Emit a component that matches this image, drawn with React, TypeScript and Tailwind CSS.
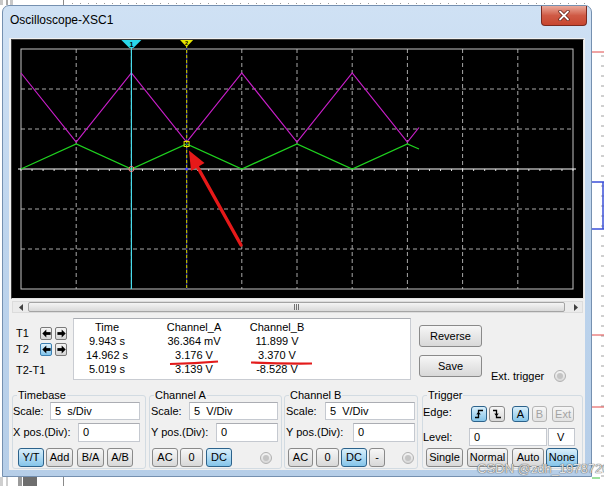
import React from "react";

type BtnProps = {
  children: React.ReactNode;
  className?: string;
  active?: boolean;
  disabled?: boolean;
};

const Btn = ({ children, className = "", active, disabled }: BtnProps) => (
  <div
    className={`flex shrink-0 items-center justify-center rounded-[3px] border text-[11px] leading-none ${
      active
        ? "border-[#2c628b] bg-linear-to-b from-[#d9effb] to-[#84c5ea]"
        : disabled
        ? "border-[#b5b5b5] bg-linear-to-b from-[#f6f6f6] to-[#e2e2e2]"
        : "border-[#8a8a8a] bg-linear-to-b from-[#f7f7f7] to-[#d8d8d8]"
    } ${disabled ? "text-[#a3a3a3]" : "text-black"} ${className}`}
  >
    {children}
  </div>
);

const Field = ({ value, className = "" }: { value: string; className?: string }) => (
  <div
    className={`flex h-full shrink-0 items-center whitespace-pre border border-[#c5c9d0] border-t-[#abadb3] bg-white pl-[4px] text-[11px] text-black ${className}`}
  >
    {value}
  </div>
);

const Radio = ({ className = "" }: { className?: string }) => (
  <div
    className={`flex h-[12px] w-[12px] shrink-0 items-center justify-center rounded-full border border-[#b0b0b0] bg-linear-to-b from-[#f4f4f4] to-[#d8d8d8] ${className}`}
  >
    <div className="h-[6px] w-[6px] rounded-full bg-[#c4c4c4]" />
  </div>
);

const ArrowBtn = ({ dir, active }: { dir: "l" | "r"; active?: boolean }) => (
  <div
    className={`flex h-[13px] w-[12px] items-center justify-center rounded-[2px] border ${
      active
        ? "border-[#3c7fb1] bg-linear-to-b from-[#dff2fc] to-[#7fc4ec]"
        : "border-[#7a7a7a] bg-linear-to-b from-[#f6f6f6] to-[#d4d4d4]"
    }`}
  >
    <svg width="9" height="9" viewBox="0 0 9 9">
      {dir === "l" ? (
        <g fill="#000">
          <polygon points="0.3,4.5 4.3,0.6 4.3,8.4" />
          <rect x="4" y="3.1" width="4.6" height="2.8" />
        </g>
      ) : (
        <g fill="#000">
          <polygon points="8.7,4.5 4.7,0.6 4.7,8.4" />
          <rect x="0.4" y="3.1" width="4.6" height="2.8" />
        </g>
      )}
    </svg>
  </div>
);

const Scope = () => {
  const gx = 9;
  const gy = 9;
  const dx = 55.2;
  const dy = 40;
  const gw = 552;
  const gh = 240;
  const cy = gy + 3 * dy;
  const vlines = [1, 2, 3, 4, 5, 6, 7, 8, 9].map((i) => gx + i * dx);
  const hlines = [1, 2, 4, 5].map((j) => gy + j * dy);
  const ticks = Array.from({ length: 51 }, (_, k) => gx + (k * dx) / 5);
  const xs = [0, 1, 2, 3, 4, 5, 6, 7].map((k) => gx + k * dx);
  const green =
    xs.map((x, k) => `${x},${k % 2 === 0 ? 129 : 104}`).join(" ") + " 407,109";
  const magenta =
    xs.map((x, k) => `${x},${k % 2 === 0 ? 33 : 102}`).join(" ") + " 407,87.5";
  const c1 = gx + 2 * dx;
  const c2 = gx + 3 * dx;

  return (
    <svg width="571" height="258" viewBox="0 0 571 258" className="block">
      <rect x="0" y="0" width="571" height="258" fill="#000" />
      {vlines.map((x) => (
        <line key={x} x1={x} y1={gy} x2={x} y2={gy + gh} stroke="#a8a8a8" strokeDasharray="4 3" />
      ))}
      {hlines.map((y) => (
        <line key={y} x1={gx} y1={y} x2={gx + gw} y2={y} stroke="#a8a8a8" strokeDasharray="4 3" />
      ))}
      <rect x={gx} y={gy} width={gw} height={gh} fill="none" stroke="#c4c4c4" />
      <line x1={gx - 3} y1={cy} x2={gx + gw + 3} y2={cy} stroke="#ffffff" />
      {ticks.map((x) => (
        <line key={x} x1={x} y1={cy} x2={x} y2={cy + 2} stroke="#e0e0e0" />
      ))}
      <polyline points={green} fill="none" stroke="#1fd21f" strokeWidth="1.3" />
      <polyline points={magenta} fill="none" stroke="#c81ec8" strokeWidth="1.2" />
      <line x1={c1} y1="0" x2={c1} y2={gy + gh} stroke="#48dcec" strokeWidth="1.2" />
      <line x1={c2} y1="0" x2={c2} y2={gy + gh} stroke="#2c2c8c" strokeWidth="1.2" />
      <line x1={c2} y1="0" x2={c2} y2={gy + gh} stroke="#b2b200" strokeWidth="1.2" strokeDasharray="3 2" />
      <polygon points={`${c1 - 10},0 ${c1 + 10},0 ${c1 + 2},8 ${c1 - 2},8`} fill="#2ad8ea" />
      <text x={c1} y="6.5" fontSize="7" fontWeight="bold" textAnchor="middle" fill="#000" fontFamily="Liberation Sans, Arial, sans-serif">
        1
      </text>
      <polygon points={`${c2 - 6.5},0 ${c2 + 6.5},0 ${c2},7`} fill="#e6e600" />
      <text x={c2} y="5" fontSize="5.5" fontWeight="bold" textAnchor="middle" fill="#000" fontFamily="Liberation Sans, Arial, sans-serif">
        2
      </text>
      <rect x={c2 - 2.5} y="101.5" width="5" height="5" fill="none" stroke="#e0e000" />
      <circle cx={c1} cy={cy} r="2.5" fill="none" stroke="#ff8a8a" />
      <circle cx={c2} cy={cy} r="1.5" fill="#3a3aff" />
      <line x1="229" y1="205" x2="185" y2="126" stroke="#e61919" strokeWidth="3.4" strokeLinecap="round" />
      <polygon points="177,110.5 192.5,123 179,131" fill="#e61919" />
    </svg>
  );
};

const ScrollBar = () => (
  <div className="ml-[3px] mt-[2px] flex h-[12px] w-[571px] items-center border border-[#dcdcdc] bg-[#ebebeb]">
    <div className="flex h-full w-[15px] items-center justify-center">
      <svg width="4" height="7" viewBox="0 0 4 7">
        <polygon points="0,3.5 4,0 4,7" fill="#404040" />
      </svg>
    </div>
    <div className="flex h-[10px] w-[537px] items-center justify-center rounded-[2px] border border-[#a4a4a4] bg-linear-to-b from-[#f5f5f5] to-[#d9d9d9]">
      <div className="flex gap-[1px]">
        <div className="h-[6px] w-[1px] bg-[#707070]" />
        <div className="h-[6px] w-[1px] bg-[#707070]" />
        <div className="h-[6px] w-[1px] bg-[#707070]" />
      </div>
    </div>
    <div className="flex h-full flex-1 items-center justify-center pl-[4px]">
      <svg width="4" height="7" viewBox="0 0 4 7">
        <polygon points="4,3.5 0,0 0,7" fill="#404040" />
      </svg>
    </div>
  </div>
);

const DataPanel = () => {
  const rows = [
    ["Time", "Channel_A", "Channel_B"],
    ["9.943 s", "36.364 mV", "11.899 V"],
    ["14.962 s", "3.176 V", "3.370 V"],
    ["5.019 s", "3.139 V", "-8.528 V"],
  ];
  return (
    <div className="mt-[4px] flex h-[64px] text-[11px] text-black">
      <div className="flex w-[64px] flex-col pt-[10px]">
        <div className="flex h-[13px] items-center">
          <div className="w-[31px] pl-[7px]">T1</div>
          <ArrowBtn dir="l" />
          <div className="ml-[3px]">
            <ArrowBtn dir="r" />
          </div>
        </div>
        <div className="mt-[3px] flex h-[13px] items-center">
          <div className="w-[31px] pl-[7px]">T2</div>
          <ArrowBtn dir="l" active />
          <div className="ml-[3px]">
            <ArrowBtn dir="r" />
          </div>
        </div>
        <div className="mt-[8px] flex h-[12px] items-center pl-[7px]">T2-T1</div>
      </div>
      <div className="mt-[1px] h-[62px] w-[338px] border border-[#c9ccd2] border-t-[#a9acb2] bg-white pt-[1px]">
        {rows.map((r, i) => (
          <div key={i} className="flex h-[14px] items-center leading-[14px]">
            <div className="w-[66px] text-center">{r[0]}</div>
            <div className="w-[108px] text-center">{r[1]}</div>
            <div className="w-[58px] text-center">{r[2]}</div>
          </div>
        ))}
      </div>
      <div className="flex flex-col pl-[8px]">
        <Btn className="mt-[8px] h-[22px] w-[63px]">Reverse</Btn>
        <div className="mt-[8px] flex h-[22px] items-start">
          <Btn className="h-[22px] w-[63px]">Save</Btn>
          <div className="ml-[9px] mt-[15px] flex h-[12px] items-center">
            <div className="w-[57px] whitespace-nowrap">Ext. trigger</div>
            <Radio className="ml-[6px]" />
          </div>
        </div>
      </div>
    </div>
  );
};

const Group = ({
  title,
  className,
  children,
}: {
  title: string;
  className: string;
  children: React.ReactNode;
}) => (
  <fieldset className={`shrink-0 rounded-[3px] border border-[#d2dbe2] pb-[1px] text-[11px] text-black ${className}`}>
    <legend className="ml-[4px] px-[1px] text-[11px] leading-[14px]">{title}</legend>
    {children}
  </fieldset>
);

const Controls = () => (
  <div className="ml-[3px] mt-[7px] flex">
    <Group title="Timebase" className="w-[134px]">
      <div className="flex h-[18px] items-center">
        <div className="w-[37px]">Scale:</div>
        <Field value="5  s/Div" className="w-[90px]" />
      </div>
      <div className="mt-[3px] flex h-[19px] items-center">
        <div className="w-[65px] whitespace-nowrap">X pos.(Div):</div>
        <Field value="0" className="w-[62px]" />
      </div>
      <div className="mt-[6px] flex h-[19px]">
        <Btn active className="ml-[5px] h-[19px] w-[26px]">Y/T</Btn>
        <Btn className="ml-[2px] h-[19px] w-[27px]">Add</Btn>
        <Btn className="ml-[4px] h-[19px] w-[27px]">B/A</Btn>
        <Btn className="ml-[3px] h-[19px] w-[26px]">A/B</Btn>
      </div>
    </Group>
    <Group title="Channel A" className="ml-[3px] w-[133px]">
      <div className="flex h-[18px] items-center">
        <div className="w-[39px] pl-[1px]">Scale:</div>
        <Field value="5  V/Div" className="w-[89px]" />
      </div>
      <div className="mt-[3px] flex h-[19px] items-center">
        <div className="w-[66px] whitespace-nowrap pl-[1px]">Y pos.(Div):</div>
        <Field value="0" className="w-[62px]" />
      </div>
      <div className="mt-[6px] flex h-[19px] items-center">
        <Btn className="ml-[2px] h-[19px] w-[26px]">AC</Btn>
        <Btn className="ml-[2px] h-[19px] w-[23px]">0</Btn>
        <Btn active className="ml-[3px] h-[19px] w-[26px]">DC</Btn>
        <Radio className="ml-[28px]" />
      </div>
    </Group>
    <Group title="Channel B" className="ml-[2px] w-[134px]">
      <div className="flex h-[18px] items-center">
        <div className="w-[40px] pl-[1px]">Scale:</div>
        <Field value="5  V/Div" className="w-[90px]" />
      </div>
      <div className="mt-[3px] flex h-[19px] items-center">
        <div className="w-[68px] whitespace-nowrap pl-[1px]">Y pos.(Div):</div>
        <Field value="0" className="w-[62px]" />
      </div>
      <div className="mt-[6px] flex h-[19px] items-center">
        <Btn className="ml-[3px] h-[19px] w-[25px]">AC</Btn>
        <Btn className="ml-[3px] h-[19px] w-[23px]">0</Btn>
        <Btn active className="ml-[2px] h-[19px] w-[26px]">DC</Btn>
        <Btn className="ml-[2px] h-[19px] w-[16px]">-</Btn>
        <Radio className="ml-[17px]" />
      </div>
    </Group>
    <Group title="Trigger" className="ml-[4px] w-[161px]">
      <div className="flex h-[21px] items-end pb-[1px]">
        <div className="w-[48px] self-center">Edge:</div>
        <Btn active className="h-[16px] w-[16px]">
          <svg width="10" height="10" viewBox="0 0 10 10">
            <path d="M1 8.5H4.5V1.5H9" fill="none" stroke="#000" strokeWidth="1.3" />
            <path d="M2.8 5.5L4.5 3.5L6.2 5.5" fill="none" stroke="#000" strokeWidth="1.1" />
          </svg>
        </Btn>
        <Btn className="ml-[2px] h-[16px] w-[16px]">
          <svg width="10" height="10" viewBox="0 0 10 10">
            <path d="M1 1.5H4.5V8.5H9" fill="none" stroke="#000" strokeWidth="1.3" />
            <path d="M2.8 4.5L4.5 6.5L6.2 4.5" fill="none" stroke="#000" strokeWidth="1.1" />
          </svg>
        </Btn>
        <Btn active className="ml-[7px] h-[16px] w-[17px]">A</Btn>
        <Btn disabled className="ml-[3px] h-[16px] w-[15px]">B</Btn>
        <Btn disabled className="ml-[5px] h-[16px] w-[22px]">Ext</Btn>
      </div>
      <div className="mt-[5px] flex h-[18px] items-center">
        <div className="w-[46px]">Level:</div>
        <Field value="0" className="w-[78px]" />
        <Field value="V" className="ml-[1px] w-[27px] pl-[8px]" />
      </div>
      <div className="mt-[2px] flex h-[19px]">
        <Btn className="ml-[3px] h-[19px] w-[37px]">Single</Btn>
        <Btn className="ml-[4px] h-[19px] w-[41px]">Normal</Btn>
        <Btn className="ml-[4px] h-[19px] w-[32px]">Auto</Btn>
        <Btn active className="ml-[2px] h-[19px] w-[32px]">None</Btn>
      </div>
    </Group>
  </div>
);

const TopStrip = () => (
  <svg width="592" height="5" viewBox="0 0 592 5" className="block">
    <rect x="0" y="0" width="3" height="5" fill="#c8c8c8" />
    <rect x="6" y="0" width="2" height="5" fill="#a8a8a8" />
    <rect x="10" y="0" width="3" height="5" fill="#c8c8c8" />
    <line x1="63.5" y1="0" x2="63.5" y2="5" stroke="#8a8a8a" />
    {Array.from({ length: 66 }, (_, i) => (
      <rect key={i} x={72 + i * 8} y="3" width="1" height="1" fill="#9a9a9a" />
    ))}
  </svg>
);

const BottomStrip = () => (
  <svg width="592" height="9" viewBox="0 0 592 9" className="block">
    <rect x="0" y="0" width="3" height="9" fill="#cfcfcf" />
    <rect x="6" y="0" width="2" height="9" fill="#cfcfcf" />
    <rect x="18" y="0" width="4" height="9" fill="#9a9a9a" />
    <rect x="23" y="0" width="14" height="9" fill="#6e6e6e" />
    <line x1="63.5" y1="0" x2="63.5" y2="9" stroke="#8a8a8a" />
  </svg>
);

const RightStrip = () => (
  <svg width="12" height="486" viewBox="0 0 12 486" className="block">
    <rect x="0" y="0" width="12" height="486" fill="#ffffff" />
    {Array.from({ length: 43 }, (_, i) => (
      <line key={i} x1="9" y1={56 + i * 10} x2="12" y2={56 + i * 10} stroke="#a0a0a0" />
    ))}
    <line x1="0" y1="52" x2="12" y2="52" stroke="#e04848" />
    <line x1="0" y1="182" x2="12" y2="182" stroke="#3a4fd8" strokeWidth="1.5" />
    <line x1="0" y1="229" x2="12" y2="229" stroke="#3a4fd8" strokeWidth="1.5" />
    <line x1="11" y1="182" x2="11" y2="229" stroke="#3a4fd8" strokeWidth="1.5" />
    <line x1="0" y1="335" x2="12" y2="335" stroke="#e04848" />
    <line x1="0" y1="407" x2="12" y2="407" stroke="#e04848" />
    <line x1="0" y1="478" x2="8" y2="478" stroke="#3cc43c" />
  </svg>
);

const App = () => {
  return (
    <div className="relative flex h-[486px] w-[604px] overflow-hidden bg-white font-['Liberation_Sans',Arial,sans-serif]">
      <div className="flex w-[592px] flex-col">
        <TopStrip />
        <div className="ml-[2px] flex h-[472px] w-[590px] flex-col rounded-t-[7px] border border-[#7590b0] bg-linear-to-b from-[#cfe1f4] via-[#bdd4ed] to-[#b6cee8]">
          <div className="flex h-[32px] items-start">
            <div className="pl-[7px] pt-[7px] text-[12px] leading-[14px] text-black">Oscilloscope-XSC1</div>
            <div className="ml-auto mr-[4px] flex h-[20px] w-[46px] items-center justify-center rounded-b-[4px] border border-t-0 border-[#7a2a20] bg-linear-to-b from-[#e9a99b] via-[#cf5a45] to-[#c8462f]">
              <svg width="12" height="11" viewBox="0 0 12 11">
                <path d="M2 1.5L10 9.5M10 1.5L2 9.5" stroke="#5a1a12" strokeWidth="3.2" strokeLinecap="round" />
                <path d="M2 1.5L10 9.5M10 1.5L2 9.5" stroke="#ffffff" strokeWidth="1.8" strokeLinecap="round" />
              </svg>
            </div>
          </div>
          <div className="ml-[6px] flex h-[432px] w-[576px] flex-col bg-[#f0f0f0]">
            <div className="ml-[2px] mt-[1px] h-[260px] w-[573px] border border-[#3a3a3a] border-b-[#e4e4e4] border-r-[#e4e4e4]">
              <Scope />
            </div>
            <ScrollBar />
            <DataPanel />
            <Controls />
          </div>
        </div>
        <BottomStrip />
      </div>
      <RightStrip />
      <svg width="604" height="486" viewBox="0 0 604 486" className="pointer-events-none absolute left-0 top-0">
        <path d="M170 364 Q195 363.5 218 361.5" fill="none" stroke="#e31b1b" strokeWidth="2.2" />
        <path d="M251 362.5 Q281 363.8 312 363.5" fill="none" stroke="#e31b1b" strokeWidth="2.2" />
      </svg>
      <div className="pointer-events-none absolute left-[477px] top-[461px] whitespace-nowrap text-[13px] leading-[16px] text-[#e2e2e2] [text-shadow:0_0_1px_#555,0_0_1px_#555]">
        CSDN @zdh_1978726
      </div>
    </div>
  );
};

export default App;
